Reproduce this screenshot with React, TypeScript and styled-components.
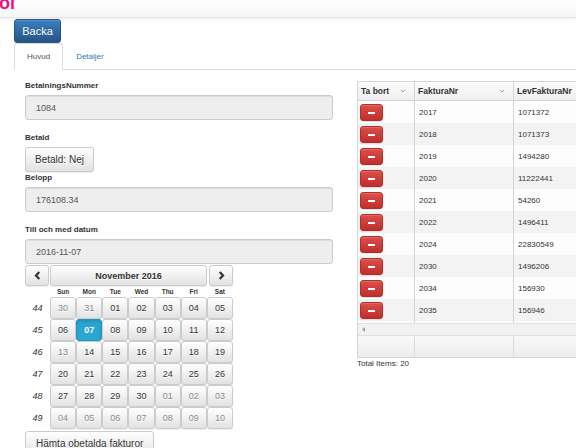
import { Fragment } from 'react';
import styled, { createGlobalStyle, css } from 'styled-components';

const GlobalStyle = createGlobalStyle`
  html, body { margin: 0; padding: 0; background: #fff; }
  body {
    width: 576px;
    height: 448px;
    overflow: hidden;
    font-family: "Liberation Sans", Arial, Helvetica, sans-serif;
    color: #333;
  }
  * { box-sizing: border-box; }
`;

const btnDefault = css`
  background-image: linear-gradient(to bottom, #fff 0%, #e2e2e2 100%);
  border: 1px solid #ccc;
  border-radius: 3px;
  box-shadow: inset 0 1px 0 rgba(255, 255, 255, 0.15), 0 1px 1px rgba(0, 0, 0, 0.075);
  color: #333;
  text-shadow: 0 1px 0 #fff;
  font-family: inherit;
  padding: 0;
  cursor: pointer;
`;

const NavBar = styled.header`
  height: 18px;
  overflow: hidden;
  background-image: linear-gradient(to bottom, #fff 0%, #f6f6f6 100%);
  border-bottom: 1px solid #e4e4e4;
  box-shadow: 0 1px 4px rgba(0, 0, 0, 0.07);
`;

const Brand = styled.span`
  display: block;
  margin: -7px 0 0 -1px;
  font-size: 18px;
  font-weight: bold;
  line-height: 20px;
  color: #e8147f;
`;

const Page = styled.main`
  padding-left: 14px;
  overflow: hidden;
`;

const BackButton = styled.button`
  margin-top: 1px;
  height: 24px;
  width: 47px;
  padding: 0;
  border: 1px solid #245580;
  border-radius: 3px;
  background-image: linear-gradient(to bottom, #3a80c2 0%, #245585 100%);
  color: #fff;
  font-family: inherit;
  font-size: 11px;
  text-shadow: 0 -1px 0 rgba(0, 0, 0, 0.2);
  box-shadow: inset 0 1px 0 rgba(255, 255, 255, 0.15), 0 1px 1px rgba(0, 0, 0, 0.075);
  display: block;
`;

const Tabs = styled.nav`
  display: flex;
  border-bottom: 1px solid #ddd;
`;

const Tab = styled.a<{ $active?: boolean }>`
  height: 27px;
  margin-bottom: -1px;
  padding: 0 12px;
  display: flex;
  align-items: center;
  font-size: 8px;
  border: 1px solid ${({ $active }) => ($active ? '#ddd' : 'transparent')};
  border-bottom-color: ${({ $active }) => ($active ? '#fff' : 'transparent')};
  border-radius: 3px 3px 0 0;
  background: ${({ $active }) => ($active ? '#fff' : 'transparent')};
  color: ${({ $active }) => ($active ? '#555' : '#337ab7')};
`;

const Pane = styled.section`
  display: flex;
  padding-top: 11px;
`;

const FormColumn = styled.div`
  flex: none;
  width: 319px;
  padding-left: 11px;
`;

const FormGroup = styled.div<{ $tight?: boolean }>`
  margin-bottom: ${({ $tight }) => ($tight ? '1px' : '13px')};
`;

const Label = styled.label`
  display: block;
  font-size: 8px;
  font-weight: bold;
  line-height: 10px;
  margin-bottom: 4px;
  color: #333;
`;

const TextInput = styled.input`
  display: block;
  width: 308px;
  height: 25px;
  padding: 0 10px;
  background: #eee;
  border: 1px solid #ccc;
  border-radius: 3px;
  box-shadow: inset 0 1px 1px rgba(0, 0, 0, 0.075);
  font-family: inherit;
  font-size: 9px;
  color: #555;
  outline: none;
`;

const ToggleButton = styled.button`
  ${btnDefault}
  display: block;
  height: 25px;
  padding: 0 9px;
  font-size: 10px;
`;

const Calendar = styled.div`
  margin-top: 1px;
  width: 208px;
`;

const CalendarNav = styled.div`
  display: flex;
  height: 21px;
`;

const NavButton = styled.button<{ $wide?: boolean }>`
  ${btnDefault}
  height: 21px;
  width: ${({ $wide }) => ($wide ? '157px' : '24px')};
  margin-right: ${({ $wide }) => ($wide ? '2px' : '1px')};
  display: flex;
  align-items: center;
  justify-content: center;
  font-size: 9px;
  font-weight: bold;
  &:last-child { margin-right: 0; }
`;

const DayGrid = styled.div`
  display: grid;
  grid-template-columns: 25px repeat(7, 26.15px);
  grid-template-rows: 11px repeat(6, 22px);
`;

const DayName = styled.div`
  display: flex;
  align-items: center;
  justify-content: center;
  font-size: 6.5px;
  font-weight: bold;
  color: #333;
`;

const WeekNumber = styled.div`
  display: flex;
  align-items: center;
  justify-content: center;
  font-size: 9px;
  font-style: italic;
  color: #333;
`;

const DayButton = styled.button<{ $muted?: boolean; $active?: boolean }>`
  ${btnDefault}
  width: 100%;
  height: 22px;
  font-size: 9px;
  color: ${({ $muted }) => ($muted ? '#8a8a8a' : '#333')};
  ${({ $active }) =>
    $active &&
    css`
      background-image: none;
      background-color: #2aa6d2;
      border-color: #2196be;
      color: #fff;
      font-weight: bold;
      text-shadow: none;
      box-shadow: inset 0 2px 3px rgba(0, 0, 0, 0.12);
    `}
`;

const FetchButton = styled.button`
  ${btnDefault}
  display: block;
  margin-top: 2px;
  height: 25px;
  padding: 0 10px;
  font-size: 10px;
`;

const GridColumn = styled.div`
  flex: none;
  width: 330px;
  margin-left: 24px;
`;

const COLS = '57px 99px 172px';

const GridBox = styled.div`
  border: 1px solid #d4d4d4;
`;

const HeaderRow = styled.div`
  display: grid;
  grid-template-columns: ${COLS};
  height: 19px;
  background-image: linear-gradient(to bottom, #fcfcfc 0%, #efefef 100%);
  border-bottom: 1px solid #d4d4d4;
`;

const HeaderCell = styled.div`
  display: flex;
  align-items: center;
  justify-content: space-between;
  padding: 0 8px 0 3px;
  border-right: 1px solid #d4d4d4;
  font-size: 8.5px;
  font-weight: bold;
  color: #333;
`;

const Body = styled.div`
  height: 222px;
  overflow: hidden;
`;

const Row = styled.div<{ $odd: boolean }>`
  display: grid;
  grid-template-columns: ${COLS};
  height: 22px;
  background: ${({ $odd }) => ($odd ? '#f3f3f3' : '#fdfdfd')};
`;

const Cell = styled.div`
  display: flex;
  align-items: center;
  padding-left: 4px;
  border-right: 1px solid #d4d4d4;
  font-size: 8px;
  color: #333;
`;

const DeleteCell = styled.div`
  padding: 3px 0 0 2px;
  border-right: 1px solid #d4d4d4;
`;

const DeleteButton = styled.button`
  width: 23px;
  height: 17px;
  padding: 0;
  border: 1px solid #b92c28;
  border-radius: 3px;
  background-image: linear-gradient(to bottom, #db4f4b 0%, #c12e2a 100%);
  box-shadow: inset 0 1px 0 rgba(255, 255, 255, 0.15), 0 1px 1px rgba(0, 0, 0, 0.1);
  display: flex;
  align-items: center;
  justify-content: center;
  cursor: pointer;
`;

const Minus = styled.span`
  display: block;
  width: 7px;
  height: 2px;
  background: #fff;
`;

const ScrollStrip = styled.div`
  height: 12px;
  background: #f1f1f1;
  border-top: 1px solid #e2e2e2;
  display: flex;
  align-items: center;
  padding-left: 4px;
`;

const FooterRow = styled.div`
  display: grid;
  grid-template-columns: ${COLS};
  height: 22px;
  background-image: linear-gradient(to bottom, #f9f9f9 0%, #ececec 100%);
  border-top: 1px solid #e0e0e0;
`;

const FooterCell = styled.div`
  border-right: 1px solid #d9d9d9;
`;

const TotalItems = styled.div`
  margin-top: 1px;
  font-size: 8px;
  line-height: 10px;
  color: #333;
`;

const SortChevron = () => (
  <svg width="6" height="4" viewBox="0 0 6 4">
    <polyline points="0.8,0.8 3,3 5.2,0.8" fill="none" stroke="#9a9a9a" strokeWidth="0.9" />
  </svg>
);

const Chevron = ({ dir }: { dir: 'left' | 'right' }) => (
  <svg width="7" height="9" viewBox="0 0 7 9">
    <polyline
      points={dir === 'left' ? '5.3,1 2,4.5 5.3,8' : '1.7,1 5,4.5 1.7,8'}
      fill="none"
      stroke="#333"
      strokeWidth="2.2"
    />
  </svg>
);

type Day = { label: string; muted?: boolean; active?: boolean };

const range = (from: number, to: number, muted = false): Day[] =>
  Array.from({ length: to - from + 1 }, (_, i) => ({
    label: String(from + i).padStart(2, '0'),
    muted,
  }));

const weeks: { week: number; days: Day[] }[] = [
  { week: 44, days: [...range(30, 31, true), ...range(1, 5)] },
  { week: 45, days: range(6, 12).map((d) => (d.label === '07' ? { ...d, active: true } : d)) },
  { week: 46, days: [{ label: '13', muted: true }, ...range(14, 19)] },
  { week: 47, days: range(20, 26) },
  { week: 48, days: [...range(27, 30), ...range(1, 3, true)] },
  { week: 49, days: range(4, 10, true) },
];

const dayNames = ['Sun', 'Mon', 'Tue', 'Wed', 'Thu', 'Fri', 'Sat'];

const invoices: [string, string][] = [
  ['2017', '1071372'],
  ['2018', '1071373'],
  ['2019', '1494280'],
  ['2020', '11222441'],
  ['2021', '54260'],
  ['2022', '1496411'],
  ['2024', '22830549'],
  ['2030', '1496206'],
  ['2034', '156930'],
  ['2035', '156946'],
  ['2036', '156950'],
  ['2037', '1496412'],
];

export default function App() {
  return (
    <>
      <GlobalStyle />
      <NavBar>
        <Brand>ol</Brand>
      </NavBar>
      <Page>
        <BackButton>Backa</BackButton>
        <Tabs>
          <Tab $active>Huvud</Tab>
          <Tab>Detaljer</Tab>
        </Tabs>
        <Pane>
          <FormColumn>
            <FormGroup>
              <Label>BetalningsNummer</Label>
              <TextInput readOnly defaultValue="1084" />
            </FormGroup>
            <FormGroup $tight>
              <Label>Betald</Label>
              <ToggleButton>Betald: Nej</ToggleButton>
            </FormGroup>
            <FormGroup>
              <Label>Belopp</Label>
              <TextInput readOnly defaultValue="176108.34" />
            </FormGroup>
            <div>
              <Label>Till och med datum</Label>
              <TextInput readOnly defaultValue="2016-11-07" />
              <Calendar>
                <CalendarNav>
                  <NavButton>
                    <Chevron dir="left" />
                  </NavButton>
                  <NavButton $wide>November 2016</NavButton>
                  <NavButton>
                    <Chevron dir="right" />
                  </NavButton>
                </CalendarNav>
                <DayGrid>
                  <DayName />
                  {dayNames.map((name) => (
                    <DayName key={name}>{name}</DayName>
                  ))}
                  {weeks.map(({ week, days }) => (
                    <Fragment key={week}>
                      <WeekNumber>{week}</WeekNumber>
                      {days.map((day, i) => (
                        <DayButton key={i} $muted={day.muted} $active={day.active}>
                          {day.label}
                        </DayButton>
                      ))}
                    </Fragment>
                  ))}
                </DayGrid>
              </Calendar>
              <FetchButton>Hämta obetalda fakturor</FetchButton>
            </div>
          </FormColumn>
          <GridColumn>
            <GridBox>
              <HeaderRow>
                <HeaderCell>
                  Ta bort <SortChevron />
                </HeaderCell>
                <HeaderCell>
                  FakturaNr <SortChevron />
                </HeaderCell>
                <HeaderCell>
                  LevFakturaNr <SortChevron />
                </HeaderCell>
              </HeaderRow>
              <Body>
                {invoices.map(([nr, lev], i) => (
                  <Row key={nr} $odd={i % 2 === 1}>
                    <DeleteCell>
                      <DeleteButton>
                        <Minus />
                      </DeleteButton>
                    </DeleteCell>
                    <Cell>{nr}</Cell>
                    <Cell>{lev}</Cell>
                  </Row>
                ))}
              </Body>
              <ScrollStrip>
                <svg width="3" height="5" viewBox="0 0 3 5">
                  <polygon points="3,0 0,2.5 3,5" fill="#a3a3a3" />
                </svg>
              </ScrollStrip>
              <FooterRow>
                <FooterCell />
                <FooterCell />
                <FooterCell />
              </FooterRow>
            </GridBox>
            <TotalItems>Total Items: 20</TotalItems>
          </GridColumn>
        </Pane>
      </Page>
    </>
  );
}
